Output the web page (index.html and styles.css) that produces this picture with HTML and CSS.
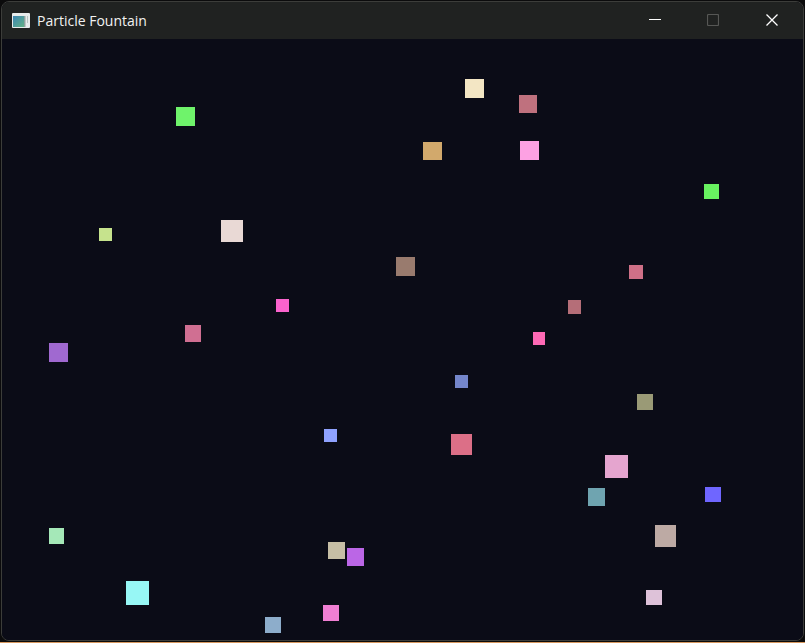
FILE: index.html
```html
<!DOCTYPE html>
<html lang="en">
<head>
    <meta charset="UTF-8">
    <meta name="viewport" content="width=device-width, initial-scale=1.0">
    <title>Particle Fountain</title>
    <link rel="stylesheet" href="styles.css">
</head>
<body>

    <div class="window">
        <div class="titlebar">
            <svg class="app-icon" width="18" height="15" viewBox="0 0 18 15">
                <defs>
                    <linearGradient id="icon-fill" x1="0" y1="0" x2="1" y2="1">
                        <stop offset="0" stop-color="#3d86b4"/>
                        <stop offset="1" stop-color="#62b286"/>
                    </linearGradient>
                </defs>
                <rect width="18" height="15" rx="1" fill="#e8ecec"/>
                <rect x="1" y="3" width="11" height="11" fill="url(#icon-fill)"/>
                <rect x="12" y="3" width="1.5" height="11" fill="#8fa3a0"/>
                <rect x="15" y="3" width="1" height="7" fill="#b9c4c2"/>
            </svg>
            <span class="title">Particle Fountain</span>
            <div class="controls">
                <div class="ctl">
                    <svg width="12" height="12" viewBox="0 0 12 12"><path d="M0 5.5H12" stroke="#fff" fill="none"/></svg>
                </div>
                <div class="ctl">
                    <svg width="12" height="12" viewBox="0 0 12 12"><rect x="0.5" y="0.5" width="11" height="11" rx="1" stroke="#565755" stroke-width="1.2" fill="none"/></svg>
                </div>
                <div class="ctl">
                    <svg width="12" height="12" viewBox="0 0 12 12"><path d="M0.5 0.5L11.5 11.5M11.5 0.5L0.5 11.5" stroke="#fff" stroke-width="1.3" fill="none"/></svg>
                </div>
            </div>
        </div>

        <div class="canvas">
            <div class="particle" style="left:463px;top:40px;width:19px;height:19px;background:#f3e6c4"></div>
            <div class="particle" style="left:517px;top:56px;width:18px;height:18px;background:#bf717e"></div>
            <div class="particle" style="left:421px;top:103px;width:19px;height:18px;background:#d2a96c"></div>
            <div class="particle" style="left:518px;top:102px;width:19px;height:19px;background:#fda1e3"></div>
            <div class="particle" style="left:174px;top:68px;width:19px;height:19px;background:#6ff36b"></div>
            <div class="particle" style="left:97px;top:189px;width:13px;height:13px;background:#c6e38d"></div>
            <div class="particle" style="left:219px;top:181px;width:22px;height:22px;background:#e9d9d5"></div>
            <div class="particle" style="left:274px;top:260px;width:13px;height:13px;background:#fb63cd"></div>
            <div class="particle" style="left:183px;top:286px;width:16px;height:17px;background:#d06f92"></div>
            <div class="particle" style="left:47px;top:304px;width:19px;height:19px;background:#a069d0"></div>
            <div class="particle" style="left:702px;top:145px;width:15px;height:15px;background:#68f260"></div>
            <div class="particle" style="left:394px;top:218px;width:19px;height:19px;background:#997b6e"></div>
            <div class="particle" style="left:627px;top:226px;width:14px;height:14px;background:#cf7087"></div>
            <div class="particle" style="left:566px;top:261px;width:13px;height:14px;background:#b56e78"></div>
            <div class="particle" style="left:531px;top:293px;width:12px;height:13px;background:#fe69b5"></div>
            <div class="particle" style="left:453px;top:336px;width:13px;height:13px;background:#7486cb"></div>
            <div class="particle" style="left:635px;top:355px;width:16px;height:16px;background:#9a9a76"></div>
            <div class="particle" style="left:322px;top:390px;width:13px;height:13px;background:#8fa2ff"></div>
            <div class="particle" style="left:47px;top:489px;width:15px;height:16px;background:#a5e8b8"></div>
            <div class="particle" style="left:326px;top:503px;width:17px;height:17px;background:#c6bea5"></div>
            <div class="particle" style="left:345px;top:509px;width:17px;height:18px;background:#bb66e6"></div>
            <div class="particle" style="left:124px;top:542px;width:23px;height:24px;background:#97f7f5"></div>
            <div class="particle" style="left:263px;top:578px;width:16px;height:16px;background:#8dadcb"></div>
            <div class="particle" style="left:321px;top:566px;width:16px;height:16px;background:#f07fd3"></div>
            <div class="particle" style="left:449px;top:395px;width:21px;height:21px;background:#dc6f87"></div>
            <div class="particle" style="left:603px;top:416px;width:23px;height:23px;background:#e5a5cf"></div>
            <div class="particle" style="left:586px;top:449px;width:17px;height:18px;background:#6fa4b0"></div>
            <div class="particle" style="left:703px;top:448px;width:16px;height:15px;background:#6f66ff"></div>
            <div class="particle" style="left:653px;top:486px;width:21px;height:22px;background:#bdaaa4"></div>
            <div class="particle" style="left:644px;top:551px;width:16px;height:15px;background:#dec2d9"></div>
        </div>
    </div>

</body>
</html>
```

FILE: styles.css
```css
* {
    margin: 0;
    padding: 0;
    box-sizing: border-box;
}
body {
    width: 805px;
    height: 643px;
    overflow: hidden;
    background: #0b0b0c;
    border-bottom: 1px solid #d8995f;
    padding: 1px;
}
.window {
    height: 640px;
    display: flex;
    flex-direction: column;
    background: #0b0c17;
    border: 1px solid #3c3d3a;
    border-radius: 8px;
    overflow: hidden;
}
.titlebar {
    height: 37px;
    flex-shrink: 0;
    display: flex;
    align-items: center;
    background: #202221;
    padding-left: 10px;
    padding-right: 2px;
    color: #f2f2f2;
}
.app-icon {
    margin-right: 7px;
    margin-top: -1px;
}
.title {
    font-family: "Open Sans", sans-serif;
    font-size: 14px;
}
.controls {
    margin-left: auto;
    display: flex;
    align-self: stretch;
}
.ctl {
    width: 58.5px;
    display: flex;
    align-items: center;
    justify-content: center;
    margin-top: -1px;
}
.canvas {
    position: relative;
    flex: 1;
    background: #0b0c17;
}
.particle {
    position: absolute;
}
```
